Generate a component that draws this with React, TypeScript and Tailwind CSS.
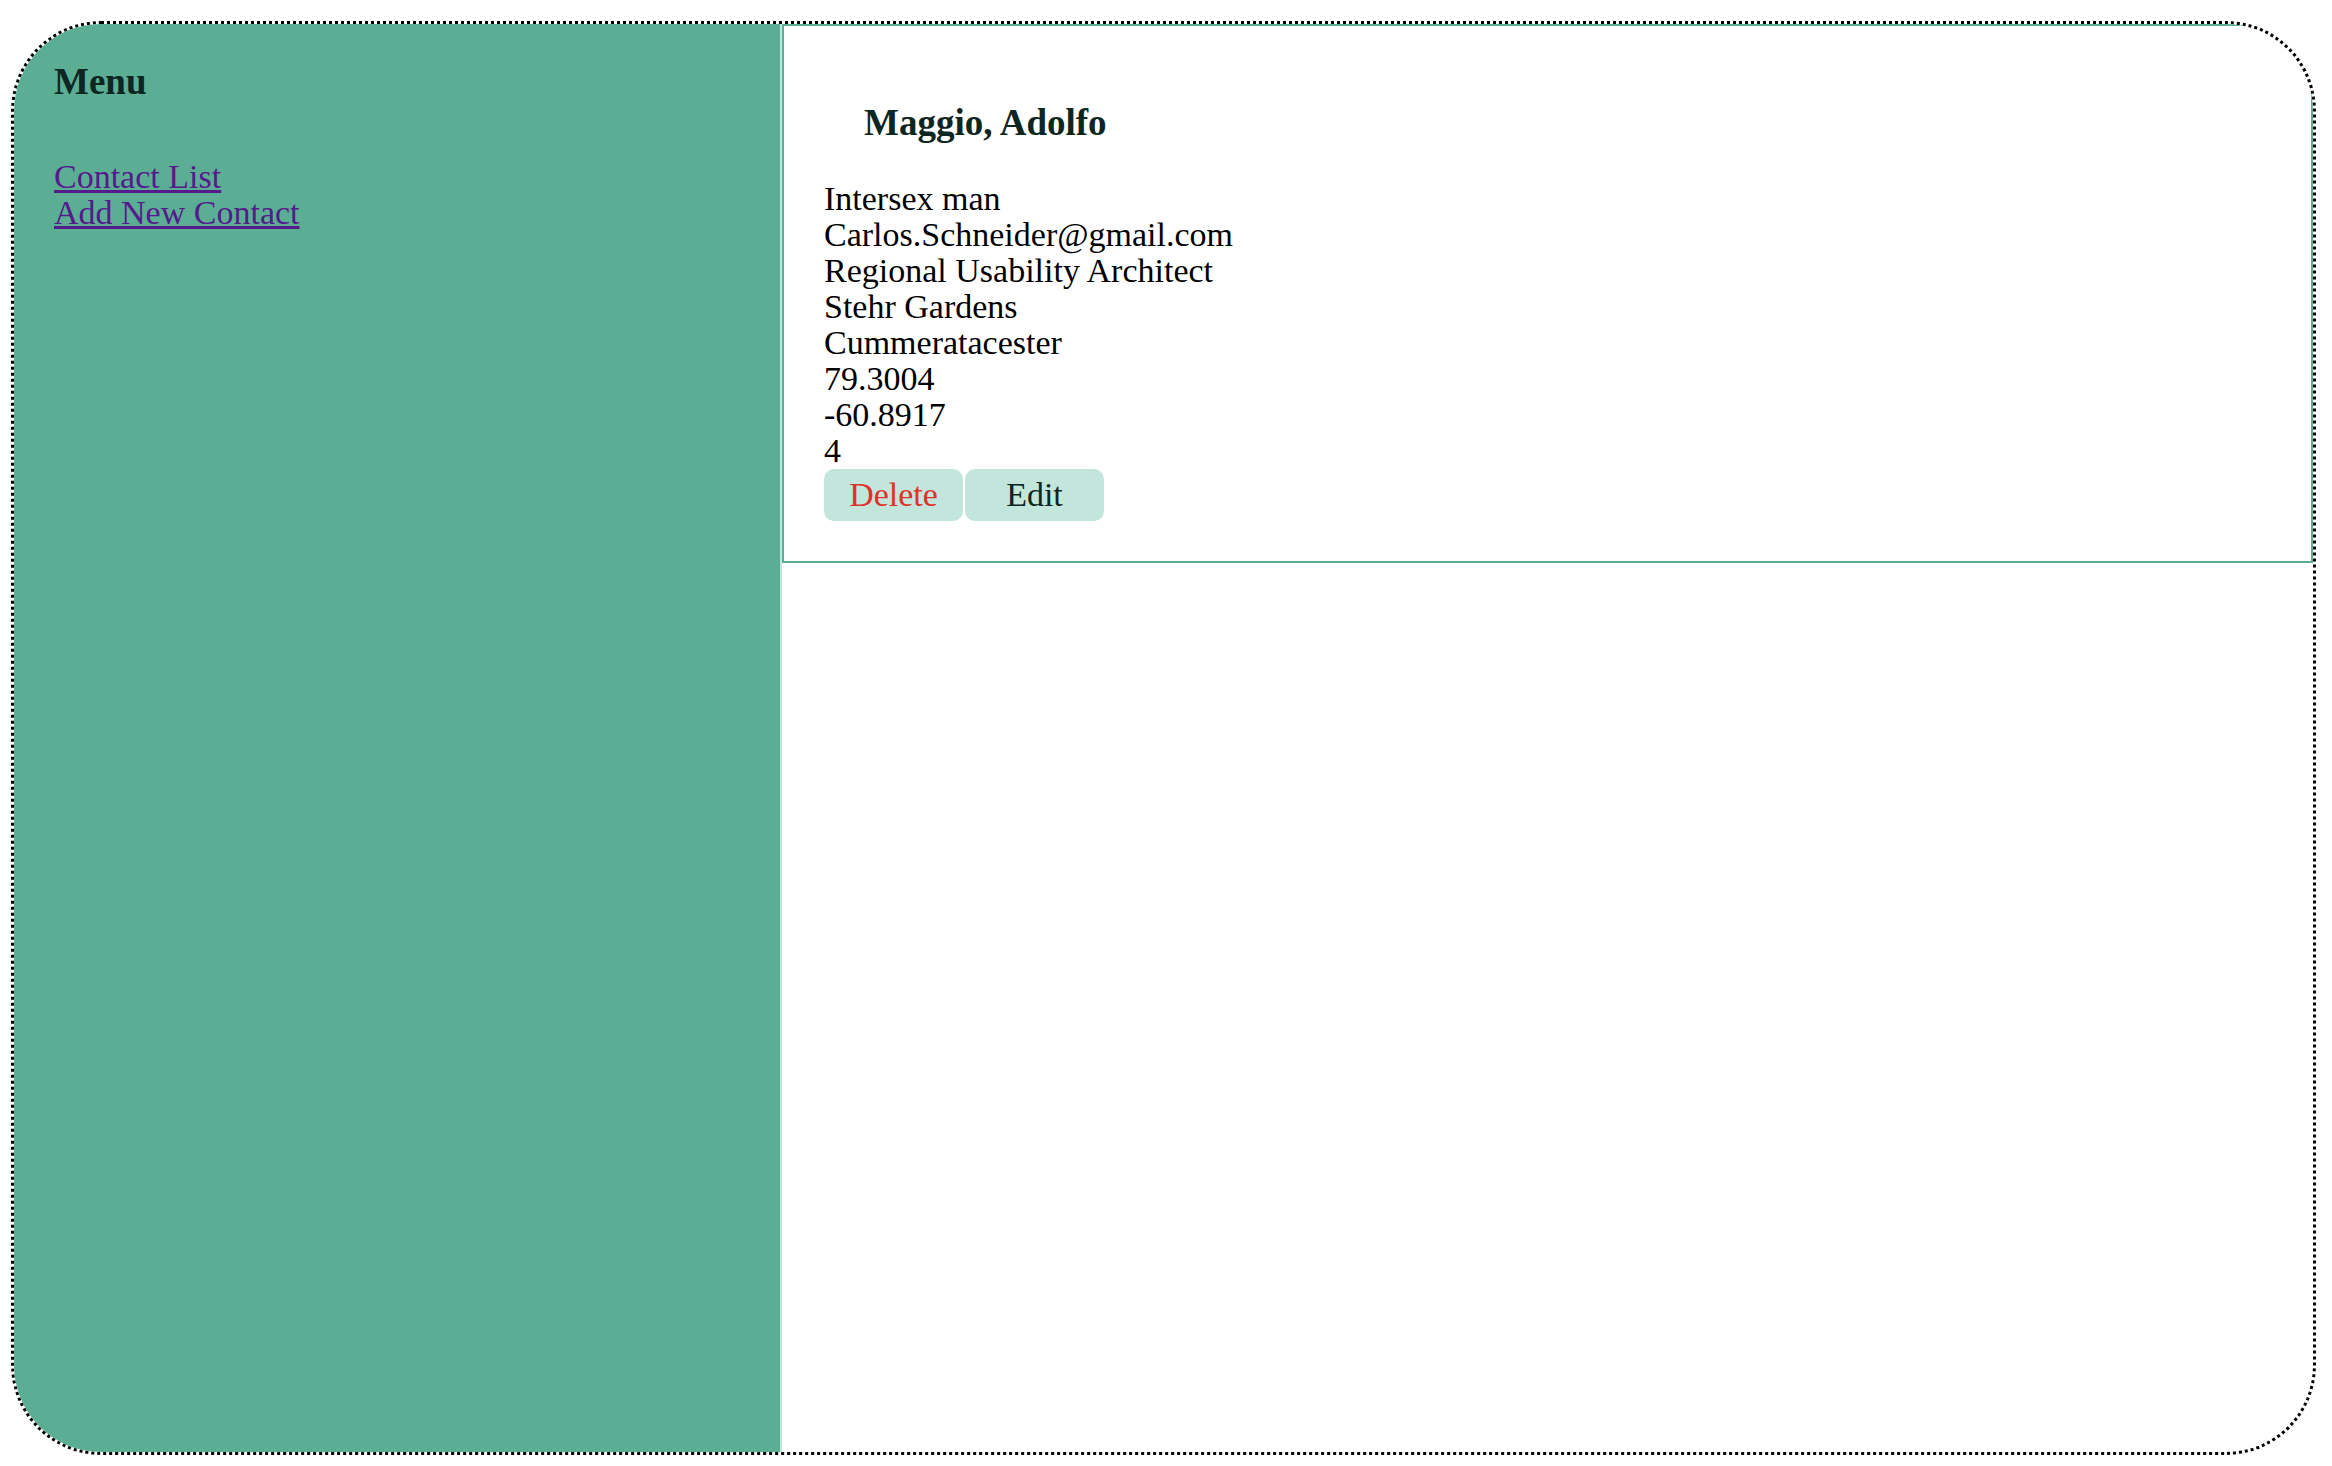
import React from 'react';

const contact = {
  name: 'Maggio, Adolfo',
  lines: [
    'Intersex man',
    'Carlos.Schneider@gmail.com',
    'Regional Usability Architect',
    'Stehr Gardens',
    'Cummeratacester',
    '79.3004',
    '-60.8917',
    '4',
  ],
};

export default function App() {
  return (
    <div
      className="min-h-screen bg-white pt-[21px] pl-[11px] text-[34px] leading-[36px] text-black"
      style={{ fontFamily: 'Georgia, "Liberation Serif", serif' }}
    >
      <div className="flex w-[2305px] h-[1434px] rounded-[90px] border-[3px] border-dotted border-black overflow-hidden">
        <aside className="w-[768px] shrink-0 bg-[#5bae94] border-r-2 border-[#c3e6dc] pl-[40px] pt-[40px]">
          <h3 className="text-[37px] leading-[36px] font-bold text-[#0d2622]">Menu</h3>
          <ul className="mt-[59px]">
            <li><a href="#" className="text-[#551a8b] underline">Contact List</a></li>
            <li><a href="#" className="text-[#551a8b] underline">Add New Contact</a></li>
          </ul>
        </aside>
        <main className="flex-1">
          <div className="border-2 border-[#5bae94] pl-[40px] pt-[79px] pb-[40px]">
            <h3 className="pl-[40px] text-[37px] leading-[36px] font-bold text-[#0d2622]">{contact.name}</h3>
            <div className="mt-[40px]">
              {contact.lines.map((l, i) => (
                <div key={i}>{l}</div>
              ))}
            </div>
            <div className="flex gap-[2px]">
              <button className="w-[139px] h-[52px] rounded-[10px] bg-[#c3e6dc] text-[#e0302a]">Delete</button>
              <button className="w-[139px] h-[52px] rounded-[10px] bg-[#c3e6dc] text-[#0d2622]">Edit</button>
            </div>
          </div>
        </main>
      </div>
    </div>
  );
}
